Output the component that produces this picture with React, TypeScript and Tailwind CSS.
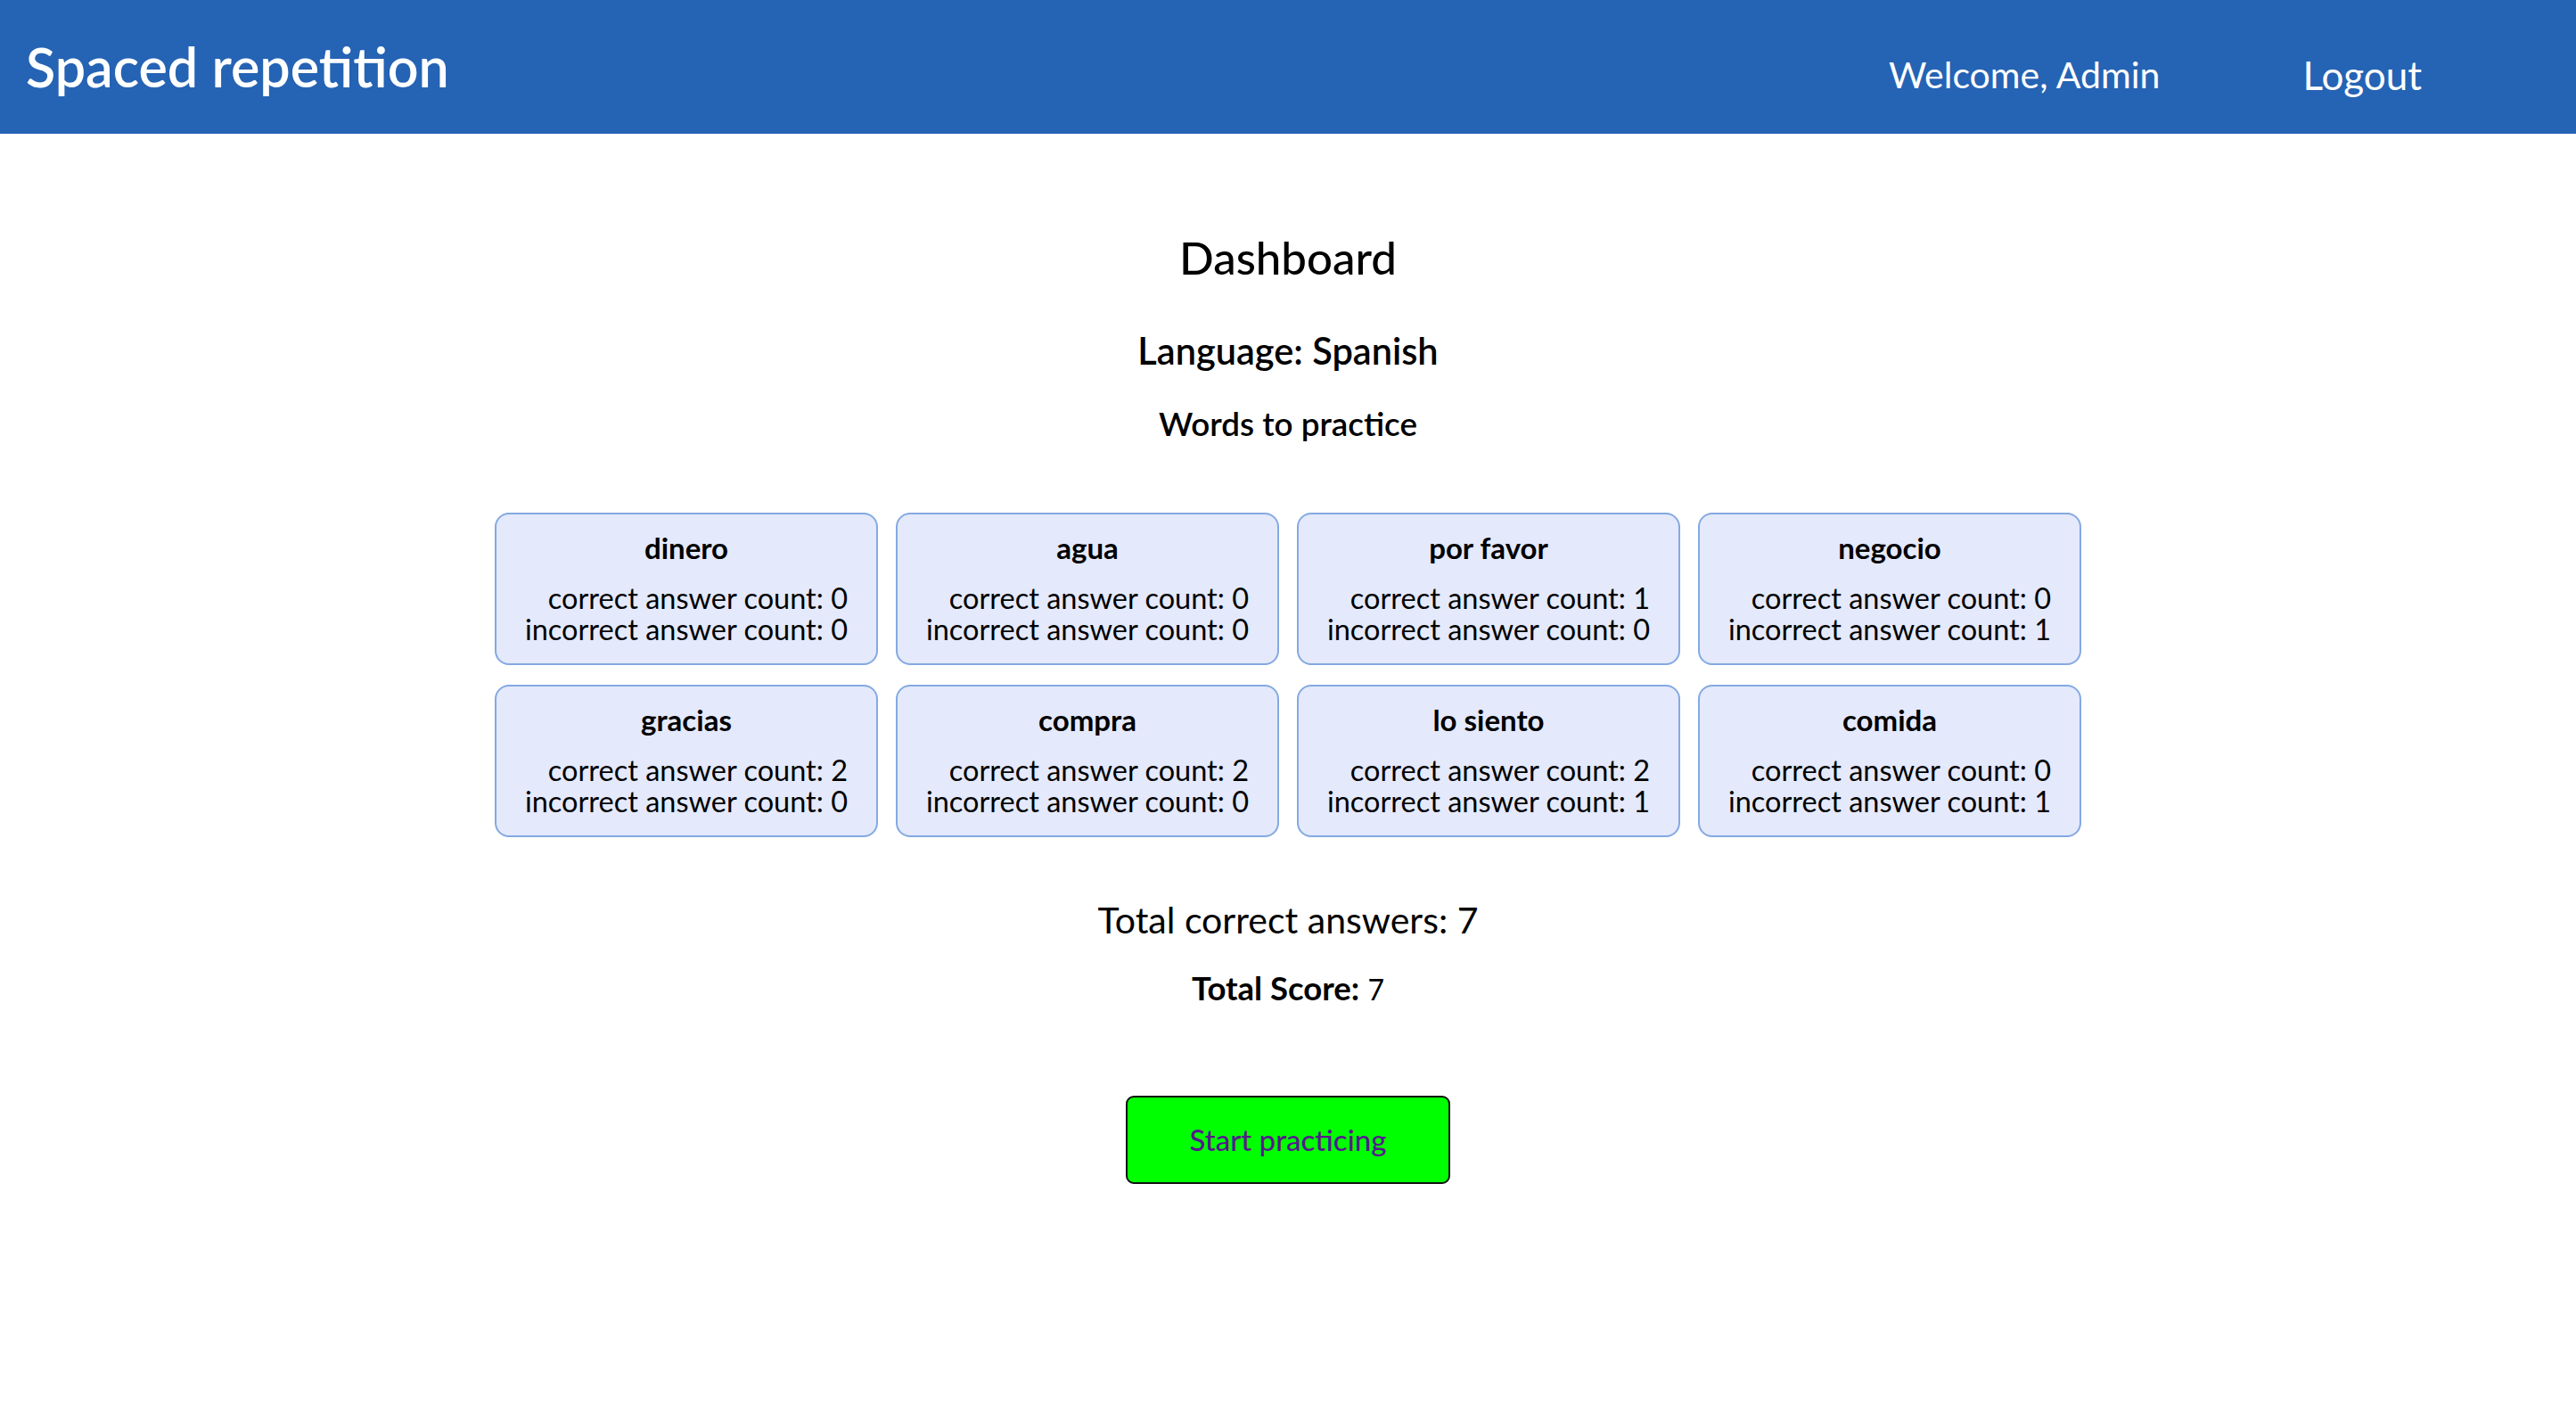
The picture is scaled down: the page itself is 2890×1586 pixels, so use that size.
import React from "react";

type Word = {
  word: string;
  correct: number;
  incorrect: number;
};

const words: Word[] = [
  { word: "dinero", correct: 0, incorrect: 0 },
  { word: "agua", correct: 0, incorrect: 0 },
  { word: "por favor", correct: 1, incorrect: 0 },
  { word: "negocio", correct: 0, incorrect: 1 },
  { word: "gracias", correct: 2, incorrect: 0 },
  { word: "compra", correct: 2, incorrect: 0 },
  { word: "lo siento", correct: 2, incorrect: 1 },
  { word: "comida", correct: 0, incorrect: 1 },
];

const WordCard = ({ item }: { item: Word }) => {
  return (
    <li className="box-border h-[171px] rounded-[16px] border-2 border-[#84a9e2] bg-[#e4e9fc] pt-[18px] text-center">
      <h4 className="text-[33px] leading-[38px] font-bold text-black">
        {item.word}
      </h4>
      <div className="mt-[20px] inline-block text-right text-[32.5px] leading-[35px] text-black">
        <div>correct answer count: {item.correct}</div>
        <div>incorrect answer count: {item.incorrect}</div>
      </div>
    </li>
  );
};

export default function App() {
  const total = words.reduce((sum, w) => sum + w.correct, 0);

  return (
    <div className="min-h-[1586px] bg-white font-['Lato','Noto_Sans',sans-serif] text-black">
      <header className="flex h-[150px] items-center justify-between bg-[#2563b4] pl-[29px] pr-[173px]">
        <h1 className="text-[61px] leading-[70px] font-semibold text-white">
          Spaced repetition
        </h1>
        <nav className="flex items-center gap-[160px] pt-[18px] font-normal text-white">
          <span className="text-[41px] leading-[48px]">Welcome, Admin</span>
          <a href="#" className="text-[44px] leading-[48px] text-white">
            Logout
          </a>
        </nav>
      </header>

      <main className="flex flex-col items-center">
        <h2 className="mt-[109px] text-[51px] leading-[60px] font-medium">
          Dashboard
        </h2>
        <h3 className="mt-[51px] text-[41.5px] leading-[46px] font-semibold">
          Language: Spanish
        </h3>
        <h3 className="mt-[39px] text-[36.8px] leading-[40px] font-semibold">
          Words to practice
        </h3>

        <ul className="mt-[80px] grid grid-cols-[repeat(4,430px)] gap-x-[20px] gap-y-[22px]">
          {words.map((w) => (
            <WordCard key={w.word} item={w} />
          ))}
        </ul>

        <p className="mt-[72px] text-[41px] leading-[42px]">
          Total correct answers: {total}
        </p>
        <p className="mt-[35px] text-[36.5px] leading-[40px]">
          <span className="font-bold">Total Score:</span>{" "}
          <span className="text-[32px]">{total}</span>
        </p>

        <button className="mt-[99px] box-border flex h-[99px] w-[364px] items-center justify-center rounded-[9px] border-2 border-[#111] bg-[#00ff00] text-[33px] font-medium text-[#551a8b]">
          Start practicing
        </button>
      </main>
    </div>
  );
}
